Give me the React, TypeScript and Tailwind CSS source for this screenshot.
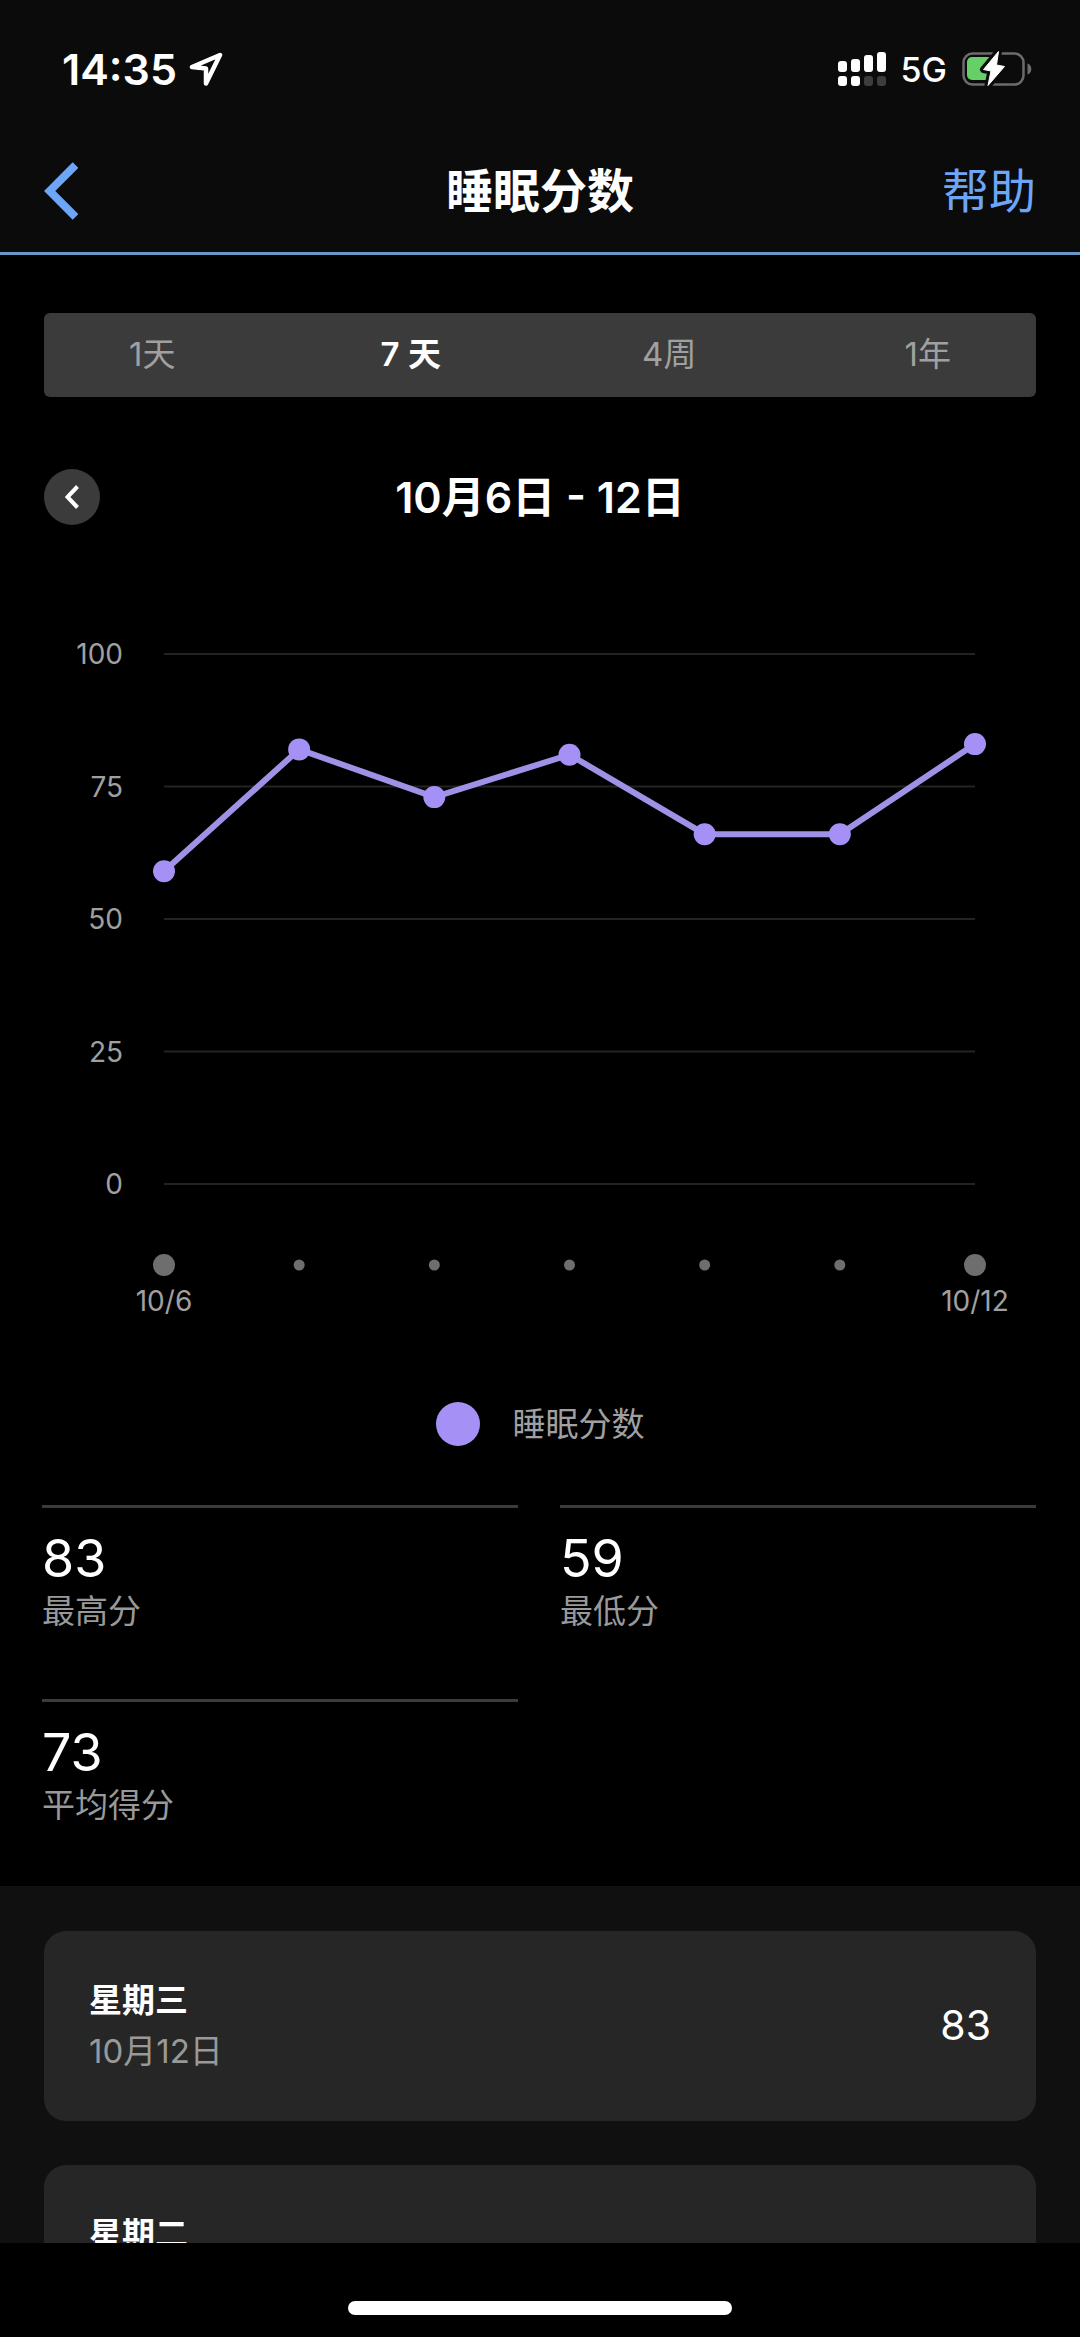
import React, { useState } from 'react';
import { clsx } from 'clsx';

interface DayScore {
  tick: string;
  score: number;
}

const week: DayScore[] = [
  { tick: '10/6', score: 59 },
  { tick: '10/7', score: 82 },
  { tick: '10/8', score: 73 },
  { tick: '10/9', score: 81 },
  { tick: '10/10', score: 66 },
  { tick: '10/11', score: 66 },
  { tick: '10/12', score: 83 },
];

const entries = [
  { weekday: '星期三', date: '10月12日', score: 83 },
  { weekday: '星期二', date: '10月11日', score: 66 },
];

const ranges = ['1天', '7 天', '4周', '1年'];

const scores = week.map((d) => d.score);
const stats = [
  { label: '最高分', value: Math.max(...scores) },
  { label: '最低分', value: Math.min(...scores) },
  { label: '平均得分', value: Math.round(scores.reduce((a, b) => a + b, 0) / scores.length) },
];

function LocationIcon() {
  return (
    <svg width="34" height="34" viewBox="0 0 34 34" fill="none" stroke="white" strokeWidth="4.5" strokeLinejoin="round">
      <path d="M31 3 3 15l14 1.5v15L31 3Z" />
    </svg>
  );
}

function SignalIcon() {
  return (
    <svg width="48" height="34" viewBox="0 0 48 34" fill="white">
      <rect x="0" y="9" width="9" height="11" rx="3" />
      <rect x="13" y="7" width="9" height="13" rx="3" />
      <rect x="26" y="3" width="9" height="17" rx="3" />
      <rect x="39" y="0" width="9" height="20" rx="3" />
      <rect x="0" y="24" width="9" height="10" rx="3" />
      <rect x="13" y="24" width="9" height="10" rx="3" />
      <rect x="26" y="24" width="9" height="10" rx="3" fill="#3d3d3d" />
      <rect x="39" y="24" width="9" height="10" rx="3" fill="#3d3d3d" />
    </svg>
  );
}

function BatteryIcon() {
  const bolt = 'M36.5 -.5 21.5 17.5 29 19 26 33.5 42.5 14.5 34.5 13Z';
  return (
    <svg width="70" height="38" viewBox="0 -2 70 38">
      <rect x="1.5" y="1.5" width="60" height="31" rx="9" fill="none" stroke="#6c6c6c" strokeWidth="2.5" />
      <path d="M65.5 11.5c2.5.8 3.8 2.8 3.8 5.5s-1.3 4.7-3.8 5.5Z" fill="#6c6c6c" />
      <rect x="5" y="5" width="26" height="23" rx="5" fill="#66cf68" />
      <path d={bolt} fill="#0b0b0b" stroke="#0b0b0b" strokeWidth="7" strokeLinejoin="round" />
      <path d={bolt} fill="white" stroke="white" strokeWidth="1" strokeLinejoin="round" />
    </svg>
  );
}

function ScoreChart() {
  const left = 164;
  const right = 975;
  const bottom = 659;
  const x = (i: number) => left + (i * (right - left)) / (week.length - 1);
  const y = (v: number) => bottom - v * 5.3;

  return (
    <svg viewBox="0 0 1080 830" className="h-auto w-full text-[28px]" role="img" aria-label="睡眠分数">
      {[100, 75, 50, 25, 0].map((v) => (
        <g key={v}>
          <line x1={left} x2={right} y1={y(v)} y2={y(v)} stroke="#232323" strokeWidth="2" />
          <text x="123" y={y(v) + 10} textAnchor="end" fill="#a0a0a0">{v}</text>
        </g>
      ))}
      <polyline
        points={week.map((d, i) => `${x(i)},${y(d.score)}`).join(' ')}
        fill="none"
        stroke="#9f92e6"
        strokeWidth="6"
      />
      {week.map((d, i) => {
        const edge = i === 0 || i === week.length - 1;
        return (
          <g key={d.tick}>
            <circle cx={x(i)} cy={y(d.score)} r="11" fill="#a591f5" />
            <circle cx={x(i)} cy="740" r={edge ? 11 : 5.5} fill="#6e6e6e" />
            {edge && <text x={x(i)} y="786" textAnchor="middle" fill="#a0a0a0">{d.tick}</text>}
          </g>
        );
      })}
    </svg>
  );
}

export default function App() {
  const [range, setRange] = useState('7 天');

  return (
    <div className="flex h-screen flex-col bg-black font-['Inter','Noto_Sans_CJK_SC',sans-serif] text-white" lang="zh-CN">
      <header className="border-b-3 border-[#6899c8] bg-[#0b0b0b]">
        <div className="flex h-[130px] items-center justify-between pt-2 pr-12 pl-[62px]">
          <div className="flex items-center gap-3">
            <span className="text-[43px] font-semibold">14:35</span>
            <LocationIcon />
          </div>
          <div className="flex items-center gap-[15px]">
            <SignalIcon />
            <span className="text-[34px] font-medium">5G</span>
            <BatteryIcon />
          </div>
        </div>
        <nav className="grid h-[122px] grid-cols-3 items-center px-11">
          <button aria-label="返回" className="justify-self-start">
            <svg width="34" height="58" viewBox="0 0 34 58" fill="none" stroke="#6ea6f7" strokeWidth="8">
              <path d="M31.5 3 5.7 29l25.8 26" />
            </svg>
          </button>
          <h1 className="text-center text-[47px] font-semibold">睡眠分数</h1>
          <button className="justify-self-end text-[47px] text-[#6ea6f7]">帮助</button>
        </nav>
      </header>

      <main className="min-h-0 flex-1 overflow-y-auto [scrollbar-width:none]">
        <div className="mx-11 mt-[58px] grid h-[84px] grid-cols-4 gap-[42px] rounded-md bg-[#3b3b3b] text-[33px]">
          {ranges.map((r) => (
            <button
              key={r}
              onClick={() => setRange(r)}
              className={clsx(r === range ? 'font-semibold text-white' : 'text-[#a0a0a0]')}
            >
              {r}
            </button>
          ))}
        </div>

        <div className="mt-[72px] grid grid-cols-[56px_1fr_56px] items-center px-11">
          <button aria-label="上一周" className="flex size-14 items-center justify-center rounded-full bg-[#3b3b3b]">
            <svg width="14" height="24" viewBox="0 0 14 24" fill="none" stroke="white" strokeWidth="4">
              <path d="M12.5 1.5 2.5 12l10 10.5" />
            </svg>
          </button>
          <h2 className="text-center text-[43px]/[56px] font-semibold">10月6日 - 12日</h2>
        </div>

        <ScoreChart />

        <div className="mt-[47px] flex items-center justify-center gap-[33px]">
          <span className="size-11 rounded-full bg-[#a591f5]" />
          <span className="text-[33px]/[44px] text-[#a0a0a0]">睡眠分数</span>
        </div>

        <dl className="mt-[59px] mr-11 ml-[42px] grid grid-cols-2 gap-x-[42px] gap-y-[66px]">
          {stats.map((s) => (
            <div key={s.label} className="flex flex-col-reverse border-t-3 border-[#3b3b3b] pt-[21px]">
              <dt className="text-[33px]/[44px] text-[#999999]">{s.label}</dt>
              <dd className="text-[52px]/[60px]">{s.value}</dd>
            </div>
          ))}
        </dl>

        <ul className="mt-[59px] flex flex-col gap-11 bg-[#101010] px-11 py-[45px]">
          {entries.map((d) => (
            <li key={d.date} className="flex items-center justify-between rounded-[22px] bg-[#262626] px-[45px] py-11">
              <div className="text-[33px]/[51px]">
                <p className="font-semibold">{d.weekday}</p>
                <p className="text-[#999999]">{d.date}</p>
              </div>
              <span className="text-[41px]">{d.score}</span>
            </li>
          ))}
        </ul>
      </main>

      <footer className="flex h-[94px] justify-center pt-[58px]">
        <div className="h-3.5 w-96 rounded-full bg-white" />
      </footer>
    </div>
  );
}
